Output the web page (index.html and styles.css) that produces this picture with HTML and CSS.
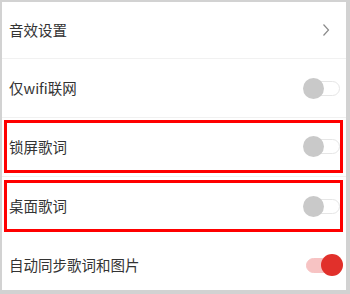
FILE: index.html
```html
<!DOCTYPE html>
<html lang="zh">
<head>
<meta charset="utf-8">
<link rel="stylesheet" href="styles.css">
</head>
<body>
<div class="screen">
  <div class="row row-first">
    <span class="label">音效设置</span>
    <svg class="chevron" width="8" height="14" viewBox="0 0 8 14"><path d="M1.5 1.5 L6.5 7 L1.5 12.5" fill="none" stroke="#8a8a8a" stroke-width="1.2"/></svg>
  </div>
  <div class="row row-second">
    <span class="label">仅wifi联网</span>
    <span class="toggle"><span class="knob"></span></span>
  </div>
  <div class="row boxed box-one">
    <span class="label">锁屏歌词</span>
    <span class="toggle"><span class="knob"></span></span>
  </div>
  <div class="sep"></div>
  <div class="row boxed box-two">
    <span class="label">桌面歌词</span>
    <span class="toggle"><span class="knob"></span></span>
  </div>
  <div class="row row-last">
    <span class="label">自动同步歌词和图片</span>
    <span class="toggle on"><span class="knob"></span></span>
  </div>
</div>
</body>
</html>
```
FILE: styles.css
```css
html, body {
  margin: 0;
  padding: 0;
  background: #ffffff;
}
.screen {
  width: 350px;
  height: 294px;
  box-sizing: border-box;
  border-style: solid;
  border-color: #d2d2d2;
  border-width: 2px 4px 4px 2px;
  background: #ffffff;
  display: flex;
  flex-direction: column;
  font-family: "Noto Sans CJK SC", "Noto Sans", sans-serif;
  color: #333333;
  overflow: hidden;
}
.row {
  display: flex;
  align-items: center;
  justify-content: space-between;
  padding: 0 6px 0 7px;
  box-sizing: border-box;
  flex: none;
}
.label {
  font-size: 14.5px;
  line-height: 20px;
}
.row-first {
  height: 57px;
  border-bottom: 1px solid #f1f1f1;
}
.chevron {
  margin-right: 10px;
}
.row-second {
  height: 59px;
  border-bottom: 1px solid #f1f1f1;
}
.boxed {
  border: 3px solid #ff0000;
  margin: 2px 3px 0 2px;
  padding: 0 0 0 2px;
}
.box-one {
  height: 53px;
}
.sep {
  height: 1px;
  background: #f1f1f1;
  margin-top: 3px;
  margin-bottom: 3px;
  flex: none;
}
.box-two {
  margin-top: 0;
  height: 52px;
}
.row-last {
  height: 58px;
  padding-top: 8px;
}
.toggle {
  position: relative;
  width: 36px;
  height: 15px;
  box-sizing: border-box;
  border: 1px solid #e6e6e6;
  border-radius: 8px;
  background: #ffffff;
  margin-right: 0;
}
.toggle .knob {
  position: absolute;
  left: -2px;
  top: -4px;
  width: 21px;
  height: 21px;
  border-radius: 50%;
  background: #c9c9c9;
}
.toggle.on {
  background: #f7c3c3;
  border-color: #f7c3c3;
  margin-right: -2px;
}
.toggle.on .knob {
  left: auto;
  right: -2px;
  width: 22px;
  height: 22px;
  top: -5px;
  background: #e1302b;
}
```
